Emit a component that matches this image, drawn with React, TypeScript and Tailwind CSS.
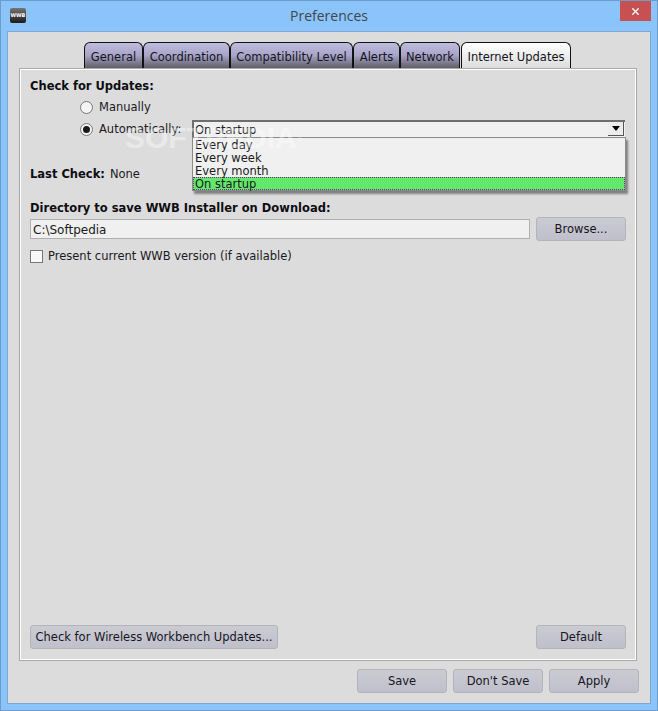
import React from 'react';
import { X } from 'lucide-react';

const tabs = [
  { label: 'General', width: 'w-[59px]' },
  { label: 'Coordination', width: 'w-[87px]' },
  { label: 'Compatibility Level', width: 'w-[123px]' },
  { label: 'Alerts', width: 'w-[47px]' },
  { label: 'Network', width: 'w-[60px]' },
];

const Button: React.FC<{ label: string; className?: string }> = ({ label, className = 'w-[90px]' }) => (
  <button className={`h-[24px] shrink-0 rounded-[3px] border border-[#b4b4b8] bg-gradient-to-b from-[#cbcbd3] to-[#c0c0cc] text-[#16161e] ${className}`}>
    {label}
  </button>
);

const App: React.FC = () => {
  return (
    <div className="relative flex h-[711px] w-[658px] flex-col overflow-hidden border border-[#6d9ccb] bg-[#8ac4fa] text-[11.5px] leading-[13px] text-[#1a1a22] font-['DejaVu_Sans',sans-serif]">
      {/* title bar */}
      <div className="relative flex h-[30px] shrink-0 items-center justify-center pb-[2px]">
        <div className="absolute left-[9px] top-[7px] flex h-[15px] w-[16px] items-center justify-center rounded-[2px] bg-gradient-to-b from-[#777] to-[#1c1c1c] text-[5px] font-bold text-white">
          WWB
        </div>
        <span className="text-[14px] font-['Open_Sans',sans-serif] text-[#3f4650]">Preferences</span>
        <div className="absolute right-[6px] top-0 flex h-[20px] w-[31px] items-center justify-center bg-[#c75050]">
          <X className="h-[11px] w-[11px] text-white" strokeWidth={3} />
        </div>
      </div>

      {/* client area */}
      <div className="ml-[6px] mr-[6px] flex h-[673px] flex-col border border-[#7fa8d0] bg-[#dcdcdc] px-[11px] pt-[10px]">
        <div className="ml-[65px] flex h-[26px] items-stretch">
          {tabs.map(tab => (
            <div
              key={tab.label}
              className={`${tab.width} flex items-center justify-center rounded-t-[6px] border-x border-t border-[#111] bg-gradient-to-b from-[#c0bce0] via-[#a8a4c8] to-[#5f5f68] pt-[3px] text-[#14141c]`}
            >
              {tab.label}
            </div>
          ))}
          <div className="ml-[1px] flex w-[110px] items-center justify-center rounded-t-[6px] border-x border-t border-[#111] bg-gradient-to-b from-[#ffffff] to-[#dcdcdc] pt-[3px] text-[#14141c]">
            Internet Updates
          </div>
        </div>

        {/* panel */}
        <div className="relative flex h-[593px] w-[618px] flex-col border border-[#aaaaaa] shadow-[inset_0_0_0_1px_#ffffff] px-[10px] pt-[10px] pb-[11px]">
          <div className="font-bold text-[#0d0d12] h-[15px] leading-[15px]">Check for Updates:</div>

          <div className="ml-[50px] mt-[6px] flex h-[15px] items-center gap-[6px]">
            <span className="h-[13px] w-[13px] rounded-full border border-[#777] bg-[#f4f4f4]" />
            <span>Manually</span>
          </div>

          <div className="relative ml-[50px] mt-[5px] flex h-[18px] items-center">
            <span className="flex h-[13px] w-[13px] items-center justify-center rounded-full border border-[#777] bg-[#f4f4f4]">
              <span className="h-[7px] w-[7px] rounded-full bg-[#1a1a1a]" />
            </span>
            <span className="ml-[6px] w-[93px]">Automatically:</span>
            <div className="flex h-[18px] w-[433px] items-center justify-between border-t-2 border-l-2 border-[#6e6e6e] bg-[#f0f0f0] pl-[1px] pr-[1px]">
              <span>On startup</span>
              <span className="flex h-[14px] w-[16px] items-center justify-center self-start border-r border-b border-[#555] bg-[#ececec]">
                <span className="h-0 w-0 border-x-[4px] border-t-[5px] border-x-transparent border-t-black" />
              </span>
            </div>
            {/* open dropdown list */}
            <div className="absolute left-[112px] top-[17px] z-10 w-[434px] border border-[#8a8a8a] bg-[#f0f0f0] shadow-[2px_3px_2px_#808080]">
              <div className="h-[13px] pl-[2px] leading-[15px]">Every day</div>
              <div className="h-[13px] pl-[2px] leading-[15px]">Every week</div>
              <div className="h-[13px] pl-[2px] leading-[15px]">Every month</div>
              <div className="h-[13px] border border-dotted border-[#7a2a8a] bg-[#62e86a] pl-[1px] leading-[13px]">On startup</div>
            </div>
          </div>

          <div className="mt-[29px] flex h-[15px] items-center gap-[5px]">
            <span className="font-bold text-[#0d0d12]">Last Check:</span>
            <span>None</span>
          </div>

          <div className="mt-[19px] h-[15px] font-bold text-[#0d0d12] leading-[15px]">Directory to save WWB Installer on Download:</div>

          <div className="mt-[1px] flex h-[24px] items-center justify-between">
            <div className="flex h-[20px] w-[500px] items-center border border-[#b0b0b0] bg-[#f0f0f0] pl-[2px] pt-[2px] text-[12px]">C:\Softpedia</div>
            <Button label="Browse..." />
          </div>

          <div className="mt-[8px] flex h-[15px] items-center gap-[5px]">
            <span className="h-[13px] w-[13px] border border-[#777] bg-[#f8f8f8]" />
            <span>Present current WWB version (if available)</span>
          </div>

          <div className="mt-auto flex items-center justify-between">
            <Button label="Check for Wireless Workbench Updates..." className="w-[248px]" />
            <Button label="Default" />
          </div>

          {/* watermark */}
          <span className="pointer-events-none absolute left-[105px] top-[52px] z-20 text-[30px] leading-[34px] font-bold text-white/40 font-['Liberation_Sans',sans-serif]">
            SOFTPEDIA<sup className="text-[9px] font-normal">®</sup>
          </span>
        </div>

        <div className="mt-[8px] flex justify-end gap-[6px]">
          <Button label="Save" />
          <Button label="Don't Save" />
          <Button label="Apply" />
        </div>
      </div>
    </div>
  );
};

export default App;
